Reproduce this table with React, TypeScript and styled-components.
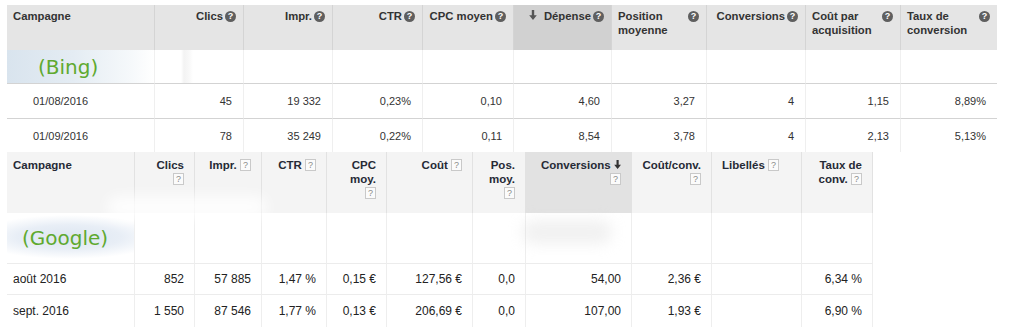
import styled, { createGlobalStyle } from "styled-components";
import { ReactNode } from "react";

const GlobalStyle = createGlobalStyle`
  html, body {
    margin: 0;
    padding: 0;
    background: #ffffff;
  }
  body {
    font-family: "Liberation Sans", Arial, sans-serif;
  }
`;

const Page = styled.div`
  width: 1016px;
  height: 335px;
  box-sizing: border-box;
  padding: 5px 0 0 7px;
  overflow: hidden;
`;

// ---------- Bing table ----------

const BingGrid = styled.div`
  display: grid;
  grid-template-columns: 148px 89px 89px 90px 91px 98px 95px 99px 95px 96px;
  width: 990px;
`;

type Align = "left" | "right" | "split";

const BingHead = styled.div<{ $align: Align; $sorted?: boolean; $last?: boolean }>`
  box-sizing: border-box;
  height: 45px;
  padding: 4px 7px 0 6px;
  background: ${(p) => (p.$sorted ? "#d1d1d1" : "#e5e5e5")};
  border-right: ${(p) => (p.$last ? "none" : "1px solid #d4d4d4")};
  font-size: 11.3px;
  font-weight: bold;
  line-height: 14px;
  color: #333;
  display: flex;
  align-items: flex-start;
  justify-content: ${(p) =>
    p.$align === "left" ? "flex-start" : p.$align === "right" ? "flex-end" : "space-between"};
  gap: 2px;
`;

const HelpDot = styled.span`
  flex: none;
  display: inline-flex;
  align-items: center;
  justify-content: center;
  width: 11px;
  height: 11px;
  margin-top: 2px;
  border-radius: 50%;
  background: #5f5f5f;
  color: #fff;
  font-size: 9px;
  font-weight: bold;
  line-height: 1;
`;

const BingLabelCell = styled.div<{ $first?: boolean; $smudge?: boolean; $last?: boolean }>`
  box-sizing: border-box;
  height: 34px;
  border-bottom: 1px solid #d3d3d3;
  border-right: ${(p) => (p.$last ? "none" : "1px solid #f0f0f0")};
  display: flex;
  align-items: center;
  padding-left: 31px;
  background: ${(p) =>
    p.$first
      ? "linear-gradient(90deg, #d9e4ee 0%, #e4ecf3 45%, #f6f9fb 85%, #ffffff 100%)"
      : p.$smudge
      ? "linear-gradient(90deg, #ffffff 0px, #ffffff 26px, #f3f3f3 29px, #f8f8f8 34px, #ffffff 38px)"
      : "#fff"};
`;

const Label = styled.span`
  font-family: "DejaVu Sans", sans-serif;
  font-size: 20px;
  color: #5fa92f;
  line-height: 1;
`;

const BingCell = styled.div<{ $left?: boolean; $tall?: boolean; $border?: boolean; $last?: boolean }>`
  box-sizing: border-box;
  height: ${(p) => (p.$tall ? "35px" : "33px")};
  border-bottom: ${(p) => (p.$border ? "1px solid #d3d3d3" : "none")};
  border-right: ${(p) => (p.$last ? "none" : "1px solid #efefef")};
  display: flex;
  align-items: center;
  justify-content: ${(p) => (p.$left ? "flex-start" : "flex-end")};
  padding: ${(p) => (p.$left ? "0 0 0 26px" : "0 11px 0 0")};
  font-size: 11px;
  color: #333;
`;

const SortArrow = ({ size = 10, color = "#555" }: { size?: number; color?: string }) => (
  <svg width={size * 0.8} height={size} viewBox="0 0 8 10" style={{ flex: "none", marginTop: 1 }}>
    <path d="M2.8 0h2.4v5.2h2.6L4 10 0.2 5.2h2.6z" fill={color} />
  </svg>
);

const SortGap = styled.span`
  display: inline-block;
  width: 3px;
`;

// ---------- Google table ----------

const GoogleWrap = styled.div`
  position: relative;
  width: 866px;
`;

const GoogleGrid = styled.div`
  display: grid;
  grid-template-columns: 128px 60px 67px 65px 60px 86px 53px 106px 80px 90px 71px;
`;

const GoogleHead = styled.div<{ $align: "left" | "right"; $sorted?: boolean }>`
  box-sizing: border-box;
  height: 61px;
  padding: ${(p) => (p.$align === "left" ? "6px 6px 0 10px" : "6px 10px 0 6px")};
  background: ${(p) => (p.$sorted ? "#e2e2e2" : "#f4f4f4")};
  border-right: 1px solid #e2e2e2;
  font-size: 11.5px;
  font-weight: bold;
  line-height: 14px;
  color: #262a36;
  text-align: ${(p) => p.$align};
  &:first-child {
    padding-left: 6px;
  }
`;

const HelpBox = styled.span`
  display: inline-flex;
  align-items: center;
  justify-content: center;
  box-sizing: border-box;
  width: 11px;
  height: 12px;
  margin-top: 1px;
  border: 1px solid #c9c9c9;
  background: #fbfbfb;
  color: #8a8a8a;
  font-size: 9px;
  font-weight: normal;
  vertical-align: top;
  line-height: 1;
`;

const GoogleLabelCell = styled.div<{ $first?: boolean }>`
  box-sizing: border-box;
  height: 51px;
  border-bottom: 1px solid #ececec;
  border-right: 1px solid #eeeeee;
  display: flex;
  align-items: center;
  padding: 0 0 0 15px;
  background: ${(p) =>
    p.$first
      ? "radial-gradient(ellipse 95px 22px at 62px 24px, #dde6f1 0%, #e8eef6 55%, #ffffff 100%)"
      : "#fff"};
`;

const GoogleCell = styled.div<{ $left?: boolean; $border?: boolean }>`
  box-sizing: border-box;
  height: ${(p) => (p.$border ? "31px" : "32px")};
  border-bottom: ${(p) => (p.$border ? "1px solid #ececec" : "none")};
  border-right: 1px solid #eeeeee;
  display: flex;
  align-items: center;
  justify-content: ${(p) => (p.$left ? "flex-start" : "flex-end")};
  padding: ${(p) => (p.$left ? "0 0 0 6px" : "0 10px 0 0")};
  font-size: 12px;
  color: #222;
`;

const Smudge = styled.div<{ $tone: "white" | "gray" }>`
  position: absolute;
  pointer-events: none;
  border-radius: 14px;
  filter: blur(7px);
  background: ${(p) => (p.$tone === "white" ? "rgba(255,255,255,0.85)" : "rgba(215,215,215,0.35)")};
`;

// ---------- data ----------

type BingHeader = { label: ReactNode; align: Align; sorted?: boolean };

const bingHeaders: BingHeader[] = [
  { label: "Campagne", align: "left" },
  { label: "Clics", align: "right" },
  { label: "Impr.", align: "right" },
  { label: "CTR", align: "right" },
  { label: "CPC moyen", align: "right" },
  { label: "Dépense", align: "right", sorted: true },
  { label: <>Position<br />moyenne</>, align: "split" },
  { label: "Conversions", align: "right" },
  { label: <>Coût par<br />acquisition</>, align: "split" },
  { label: <>Taux de<br />conversion</>, align: "split" },
];

const bingRows = [
  ["01/08/2016", "45", "19 332", "0,23%", "0,10", "4,60", "3,27", "4", "1,15", "8,89%"],
  ["01/09/2016", "78", "35 249", "0,22%", "0,11", "8,54", "3,78", "4", "2,13", "5,13%"],
];

type GoogleHeader = { label: ReactNode; align: "left" | "right"; sorted?: boolean };

const googleHeaders: GoogleHeader[] = [
  { label: "Campagne", align: "left" },
  { label: <>Clics<br /><HelpBox>?</HelpBox></>, align: "right" },
  { label: <>Impr. <HelpBox>?</HelpBox></>, align: "right" },
  { label: <>CTR <HelpBox>?</HelpBox></>, align: "right" },
  { label: <>CPC<br />moy.<br /><HelpBox>?</HelpBox></>, align: "right" },
  { label: <>Coût <HelpBox>?</HelpBox></>, align: "right" },
  { label: <>Pos.<br />moy.<br /><HelpBox>?</HelpBox></>, align: "right" },
  {
    label: (
      <>
        Conversions <SortArrow size={9} color="#333" />
        <br />
        <HelpBox>?</HelpBox>
      </>
    ),
    align: "right",
    sorted: true,
  },
  { label: <>Coût/conv.<br /><HelpBox>?</HelpBox></>, align: "right" },
  { label: <>Libellés <HelpBox>?</HelpBox></>, align: "left" },
  { label: <>Taux de<br />conv. <HelpBox>?</HelpBox></>, align: "right" },
];

const googleRows = [
  ["août 2016", "852", "57 885", "1,47 %", "0,15 €", "127,56 €", "0,0", "54,00", "2,36 €", "", "6,34 %"],
  ["sept. 2016", "1 550", "87 546", "1,77 %", "0,13 €", "206,69 €", "0,0", "107,00", "1,93 €", "", "6,90 %"],
];

export default function App() {
  return (
    <>
      <GlobalStyle />
      <Page>
        <BingGrid>
          {bingHeaders.map((h, i) => (
            <BingHead key={i} $align={h.align} $sorted={h.sorted} $last={i === bingHeaders.length - 1}>
              {h.sorted && (
                <>
                  <SortArrow />
                  <SortGap />
                </>
              )}
              <span>{h.label}</span>
              {i > 0 && <HelpDot>?</HelpDot>}
            </BingHead>
          ))}
          {bingHeaders.map((_, i) => (
            <BingLabelCell key={i} $first={i === 0} $smudge={i === 1} $last={i === bingHeaders.length - 1}>
              {i === 0 && <Label>(Bing)</Label>}
            </BingLabelCell>
          ))}
          {bingRows.map((row, r) =>
            row.map((v, i) => (
              <BingCell
                key={`${r}-${i}`}
                $left={i === 0}
                $tall={r === 0}
                $border={r === 0}
                $last={i === row.length - 1}
              >
                {v}
              </BingCell>
            ))
          )}
        </BingGrid>

        <GoogleWrap>
          <GoogleGrid>
            {googleHeaders.map((h, i) => (
              <GoogleHead key={i} $align={h.align} $sorted={h.sorted}>
                {h.label}
              </GoogleHead>
            ))}
            {googleHeaders.map((_, i) => (
              <GoogleLabelCell key={i} $first={i === 0}>
                {i === 0 && <Label>(Google)</Label>}
              </GoogleLabelCell>
            ))}
            {googleRows.map((row, r) =>
              row.map((v, i) => (
                <GoogleCell key={`${r}-${i}`} $left={i === 0} $border={r === 0}>
                  {v}
                </GoogleCell>
              ))
            )}
          </GoogleGrid>
          <Smudge $tone="white" style={{ left: 100, top: 44, width: 160, height: 22 }} />
          <Smudge $tone="gray" style={{ left: 515, top: 68, width: 90, height: 24 }} />
        </GoogleWrap>
      </Page>
    </>
  );
}
